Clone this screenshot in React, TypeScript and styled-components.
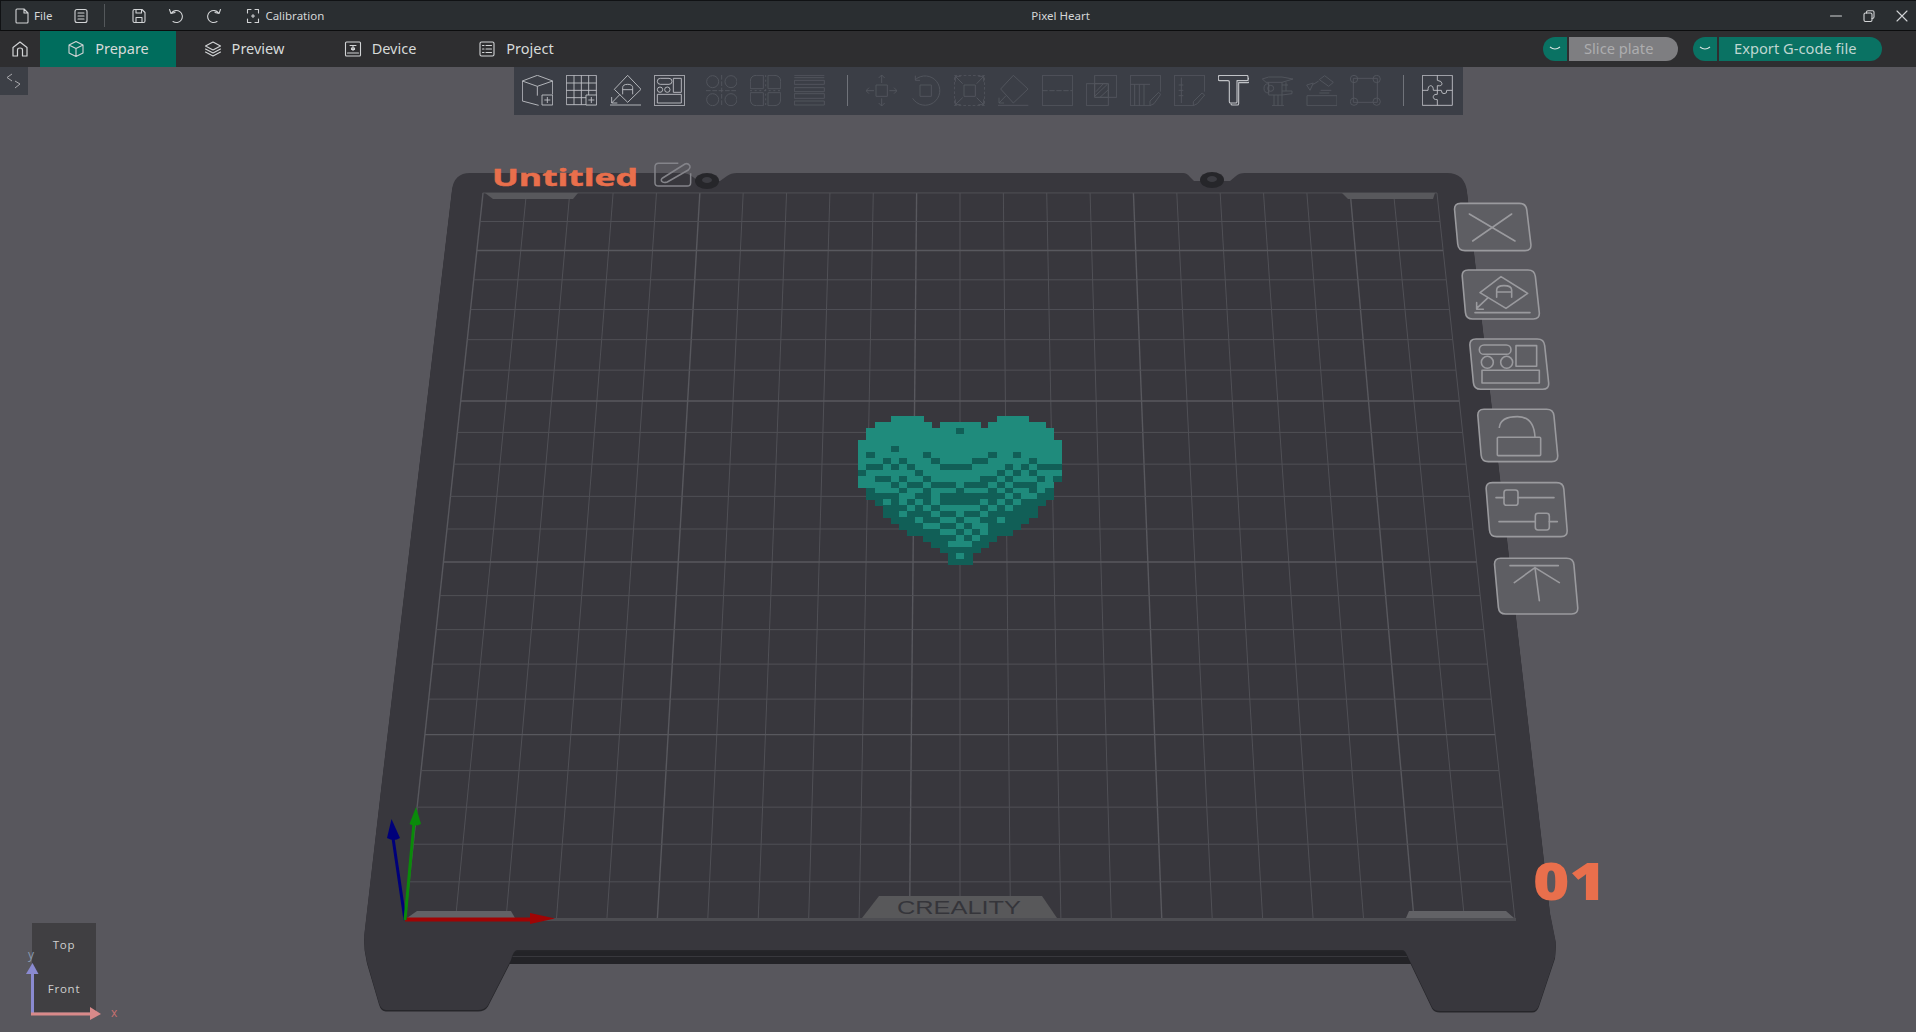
import React from "react";
import styled, { createGlobalStyle } from "styled-components";

const GlobalStyle = createGlobalStyle`
  html, body {
    margin: 0;
    padding: 0;
    height: 100%;
    overflow: hidden;
    background: #58575d;
  }
  #root {
    height: 100%;
  }
`;

const Page = styled.div`
  display: flex;
  flex-direction: column;
  height: 100vh;
  font-family: "Noto Sans", "Open Sans", sans-serif;
`;

const TitleBar = styled.div`
  position: relative;
  display: flex;
  align-items: center;
  height: 31px;
  box-sizing: border-box;
  flex: none;
  background: #2a2e31;
  border-top: 1px solid #101214;
  border-bottom: 1px solid #0c0d0e;
  border-left: 1px solid #101214;
  color: #d4d6d8;
  font-size: 11.5px;
`;

const BarGlyph = styled.svg`
  flex: none;
  fill: none;
  stroke: #d2d4d6;
  stroke-width: 1.1;
  stroke-linecap: round;
  stroke-linejoin: round;
`;

const BarItem = styled.div<{ $left: number }>`
  display: flex;
  align-items: center;
  gap: 5px;
  margin-left: ${(p) => p.$left}px;
`;

const BarRule = styled.div`
  width: 1px;
  height: 23px;
  margin-left: 16px;
  background: #54585b;
`;

const WindowTitle = styled.div`
  position: absolute;
  left: 0;
  right: 0;
  top: 0;
  bottom: 0;
  padding-left: 204px;
  display: flex;
  align-items: center;
  justify-content: center;
  pointer-events: none;
`;

const WindowControls = styled.div`
  margin-left: auto;
  display: flex;
  gap: 21px;
  padding-right: 8px;
`;

const TabBar = styled.div`
  display: flex;
  align-items: stretch;
  height: 36px;
  flex: none;
  background: #2e2e30;
`;

const HomeSlot = styled.div`
  width: 40px;
  display: flex;
  align-items: center;
  justify-content: center;
`;

const Tab = styled.div<{ $active?: boolean }>`
  width: 136px;
  box-sizing: border-box;
  display: flex;
  align-items: center;
  justify-content: center;
  gap: 10px;
  background: ${(p) => (p.$active ? "#006d5d" : "transparent")};
  color: #d6dad9;
  font-size: 14.5px;
  line-height: 1;
  span {
    position: relative;
    top: -1px;
  }
`;

const ActionGroup = styled.div`
  margin-left: auto;
  display: flex;
  align-items: center;
  gap: 15px;
  padding-right: 34px;
`;

const SplitButton = styled.div`
  display: flex;
  height: 24px;
  gap: 2px;
`;

const SplitArrow = styled.div`
  width: 24px;
  display: flex;
  align-items: center;
  justify-content: center;
  background: #0a7263;
  border-radius: 12px 0 0 12px;
`;

const SplitLabel = styled.div<{ $off?: boolean; $width: number }>`
  width: ${(p) => p.$width}px;
  box-sizing: border-box;
  padding: 0 0 3px 15px;
  display: flex;
  align-items: center;
  font-size: 14.7px;
  border-radius: 0 12px 12px 0;
  background: ${(p) => (p.$off ? "#7e7e81" : "#0a7263")};
  color: ${(p) => (p.$off ? "#adadaf" : "#bfd6d1")};
`;

const Viewport = styled.div`
  position: relative;
  flex: 1;
  min-height: 0;
  overflow: hidden;
  background: #58575d;
`;

const Scene = styled.svg`
  display: block;
  width: 100%;
  height: 100%;
`;

const SideToggle = styled.div`
  position: absolute;
  left: 0;
  top: 0;
  width: 28px;
  height: 28px;
  background: #3c3f46;
`;

const Toolbar = styled.div`
  position: absolute;
  left: 514px;
  top: 0;
  display: flex;
  gap: 13px;
  padding: 8px 10px 9px 8px;
  background: #3b3e46;
`;

const ToolRule = styled.div`
  width: 1px;
  height: 31px;
  margin: 0 5px 0 9px;
  background: #70737a;
`;

const ToolGlyph = styled.svg<{ $off?: boolean; $gap?: number }>`
  flex: none;
  width: 31px;
  height: 31px;
  margin-left: ${(p) => p.$gap || 0}px;
  fill: none;
  stroke: ${(p) => (p.$off ? "#54575f" : "#c0c2c6")};
  stroke-width: 2.7;
  stroke-linejoin: round;
`;

const ViewCube = styled.div`
  position: absolute;
  left: 32px;
  top: 856px;
  width: 64px;
  height: 89px;
  display: flex;
  flex-direction: column;
  background: #403f42;
  color: #cfcfcf;
  font-family: "Open Sans", sans-serif;
  font-size: 11.5px;
  letter-spacing: 0.8px;
`;

const CubeFace = styled.div`
  flex: 1;
  padding-bottom: 2px;
  display: flex;
  align-items: center;
  justify-content: center;
`;

const CubeAxes = styled.svg`
  position: absolute;
  left: 0;
  top: 870px;
  width: 130px;
  height: 95px;
  overflow: visible;
`;

const AxisLabel = styled.text<{ $color: string }>`
  fill: ${(p) => p.$color};
  font-family: "Open Sans", sans-serif;
  font-size: 12px;
`;

const PlateName = styled.text`
  fill: #e96f4c;
  stroke: #e96f4c;
  stroke-width: 0.5px;
  font-family: "Open Sans", sans-serif;
  font-weight: 700;
  font-size: 23px;
`;

const PlateIndex = styled.text`
  fill: #e96f4c;
  font-family: "Open Sans", sans-serif;
  font-weight: 800;
  font-size: 51px;
`;

const BrandMark = styled.text`
  fill: #35353a;
  font-family: "Liberation Sans", sans-serif;
  font-size: 18px;
`;

const Chevron = () => (
  <svg width="12" height="6" viewBox="0 0 12 6" fill="none" stroke="#d8e4e1" strokeWidth="1.2">
    <path d="M1 1 Q6 5 11 1" />
  </svg>
);

const plusBox = (x: number, y: number) => (
  <>
    <rect x={x} y={y} width={32} height={30} fill="#3b3e46" />
    <path d={`M${x + 16} ${y + 6} V${y + 24} M${x + 7} ${y + 15} H${x + 25}`} />
  </>
);

const letterA = "M38 58 V38 Q38 28 53 28 Q68 28 68 38 V58 M38 44 H68";

const tools: { off?: boolean; gap?: number; rule?: boolean; art?: React.ReactNode }[] = [
  {
    art: (
      <>
        <path d="M1 18 L46 1 L92 18 V58 M1 18 V78 L50 91 M1 18 L46 34 L92 18 M46 34 V62" />
        {plusBox(60, 60)}
      </>
    ),
  },
  {
    art: (
      <>
        <rect x="1" y="1" width="90" height="88" />
        <path d="M24 1 V89 M46 1 V89 M68 1 V60 M1 24 H91 M1 46 H91 M1 68 H60" />
        {plusBox(60, 60)}
      </>
    ),
  },
  {
    art: (
      <>
        <path d="M53 1 L93 43 L53 82 L13 43 Z M0 90 H93 M30 58 L5 84 M5 66 V84 H22" />
        <path d={letterA} />
      </>
    ),
  },
  {
    art: (
      <>
        <rect x="1" y="1" width="91" height="91" />
        <rect x="10" y="10" width="44" height="18" rx="9" />
        <rect x="58" y="10" width="24" height="42" />
        <circle cx="18" cy="44" r="8" />
        <circle cx="40" cy="44" r="8" />
        <rect x="10" y="58" width="72" height="26" />
      </>
    ),
  },
  {
    off: true,
    gap: 8,
    art: (
      <>
        <circle cx="20" cy="20" r="18" />
        <circle cx="75" cy="20" r="18" />
        <circle cx="20" cy="74" r="18" />
        <circle cx="75" cy="74" r="18" />
        <path d="M47 0 V93 M0 47 H93" strokeDasharray="14 5" />
      </>
    ),
  },
  {
    off: true,
    art: (
      <>
        <path d="M40 1 H20 Q1 1 1 20 V41 H40 Z M54 1 H72 Q92 1 92 20 V41 H54 Z M40 53 H1 V72 Q1 92 20 92 H40 Z M54 53 H92 V72 Q92 92 72 92 H54 Z" />
        <path d="M47 0 V93 M0 47 H93" strokeDasharray="6 8" />
      </>
    ),
  },
  {
    off: true,
    art: (
      <>
        <path d="M1 1 H91 M1 8 H91 M1 16 V28 H91 V16 Z M1 38 V50 H91 V38 Z M1 56 V70 H91 V56 Z M1 78 V90 H91 V78 Z" />
      </>
    ),
  },
  { rule: true },
  {
    off: true,
    art: (
      <>
        <rect x="30" y="30" width="34" height="34" />
        <path d="M47 0 V24 M38 9 L47 0 L56 9 M47 93 V70 M38 84 L47 93 L56 84 M0 47 H24 M9 38 L0 47 L9 56 M93 47 H70 M84 38 L93 47 L84 56" />
      </>
    ),
  },
  {
    off: true,
    art: (
      <>
        <rect x="30" y="30" width="34" height="34" />
        <path d="M16 14 A44 44 0 1 1 8 70 M16 2 V16 H30" />
      </>
    ),
  },
  {
    off: true,
    art: (
      <>
        <rect x="1" y="1" width="91" height="91" strokeDasharray="8 6" />
        <rect x="30" y="30" width="34" height="34" />
        <path d="M4 4 L26 26 M89 4 L68 26 M4 89 L26 68 M89 89 L68 68 M4 20 V4 H20 M73 4 H89 V20 M4 73 V89 H20 M73 89 H89 V73" />
      </>
    ),
  },
  {
    off: true,
    art: (
      <>
        <path d="M46 1 L90 42 L46 84 L8 42 Z M0 91 H91 M24 62 L3 84 M3 68 V84 H18" />
      </>
    ),
  },
  {
    off: true,
    art: (
      <>
        <rect x="1" y="1" width="91" height="91" />
        <path d="M1 47 H91" strokeDasharray="16 5" />
      </>
    ),
  },
  {
    off: true,
    art: (
      <>
        <rect x="26" y="1" width="66" height="66" />
        <rect x="1" y="26" width="66" height="66" />
        <path d="M26 26 H67 V67 H26 Z M30 50 L52 26 M26 64 L64 28 M42 67 L67 44" />
      </>
    ),
  },
  {
    off: true,
    art: (
      <>
        <path d="M92 50 V1 H1 V92 H62 M1 28 H60 M14 28 V92 M28 28 V92 M42 28 V92 M60 78 L86 52 L92 58 L72 86 L60 92 Z" />
      </>
    ),
  },
  {
    off: true,
    art: (
      <>
        <path d="M92 50 V1 H1 V92 H58 M22 8 V84" />
        <path d="M58 80 L84 54 L92 60 L70 86 L58 92 Z M14 30 H28 M14 46 H28 M14 62 H28" />
      </>
    ),
  },
  {
    art: (
      <path
        d="M6 1 H86 Q90 1 90 5 V14 Q90 17 86 17 H57 V80 Q57 84 53 84 H38 Q34 84 34 80 V20 Q34 17 30 17 H5 Q1 17 1 13 V5 Q1 1 6 1 Z M90 10 H94 V20 Q94 23 90 23 H62 V86 Q62 90 58 90 H43 Q39 90 39 86"
        strokeWidth="3.4"
      />
    ),
  },
  {
    off: true,
    art: (
      <>
        <path d="M1 12 L20 6 H60 L93 12 L60 22 H12 Z M20 22 V60 H60 V22 M6 40 Q6 26 20 26 V54 Q6 54 6 40 Z M60 48 H90 V56 L60 60 M36 60 V92 M48 60 V92 M60 60 V92 M30 92 H66 M60 30 H78 M72 22 V48" />
        <circle cx="26" cy="40" r="9" />
      </>
    ),
  },
  {
    off: true,
    art: (
      <>
        <rect x="3" y="62" width="90" height="30" />
        <path d="M40 14 L56 2 L82 22 L68 34 Z M44 46 H76 M40 54 H70 M2 30 L22 24 L12 46 Z M38 18 L22 28" />
      </>
    ),
  },
  {
    off: true,
    art: (
      <>
        <rect x="10" y="10" width="72" height="72" />
        <circle cx="12" cy="12" r="11" />
        <circle cx="80" cy="12" r="11" />
        <circle cx="12" cy="80" r="11" />
        <circle cx="80" cy="80" r="11" />
      </>
    ),
  },
  { rule: true },
  {
    art: (
      <>
        <rect x="1" y="1" width="90" height="90" />
        <path d="M46 1 V16 Q60 18 60 26 Q60 34 46 32 V58 Q36 56 34 64 Q32 74 46 74 V91 M1 46 H18 Q18 32 26 32 Q34 32 34 46 H58 Q58 56 66 56 Q76 56 74 46 H91" />
      </>
    ),
  },
];

const heartRows = [
  "....LLLL.........LLLL....",
  "..LLLLLLL.LLLLL.LLLLLLL..",
  ".LLLLLLLLLLLDLLLLLLLLLLL.",
  ".LLLLLLLLLLLLLLLLLLLLLLL.",
  "LLLLLLLLLLLLLLLLLLLLLLLLL",
  "LLLLDLLLLLLLLLLLLLLLLLLLL",
  "LDLLLLLLDLLLLLLLDLLDLLLLL",
  "LLLDLDLLLDLLLLDDLLLLLDLLL",
  "LDDLDLDLLLDDDDLLLLDLDLDDD",
  "DLLLLLLDLLLLLLLLLDLDLDLLL",
  "LLDDLDLLDLLLLLLDDLDLLLDLD",
  "LLLLDLDDLDDDLDDDLDLDDDLL.",
  ".DLLLDLLDLLLDLLLDLDLLDLD.",
  ".DDDDLLDDLDDDDDDDDLDLLDD.",
  "..DLDLDLDLDDDDDLDLDLDDD..",
  "...DDDLDLDLLLLLDLDLDDD...",
  "...DDLDDDLDDLDDLDDDDDD...",
  "....DDDLDDLLDLLDDLDDD....",
  ".....DDDLLDDLDLLDDDD.....",
  "......DDDDLLDLDLDDD......",
  "........DDDDLDLDD........",
  ".........DDLLLDD.........",
  "..........DDDDD..........",
  "...........DLD...........",
  "...........DDD...........",
];

const HEART_X = 858.3;
const HEART_Y = 416;
const HEART_W = 8.13;
const HEART_H = 5.96;

const Heart = () => (
  <g shapeRendering="crispEdges">
    {heartRows.map((row, r) =>
      row.split("").map((cell, c) =>
        cell === "." ? null : (
          <rect
            key={`${r}-${c}`}
            x={HEART_X + c * HEART_W}
            y={HEART_Y + r * HEART_H}
            width={HEART_W + 0.4}
            height={HEART_H + 0.4}
            fill={cell === "L" ? "#1f8b7c" : "#115f57"}
          />
        )
      )
    )}
  </g>
);

// bed perspective, u goes left to right and v from front to back
const K = 0.1636;
const project = (u: number, v: number): [number, number] => {
  const s = 1 / (1 + K * v);
  return [960 + (u - 0.5) * 1110 * s, 920 - 846 * v * s];
};

const BedGrid = () => {
  const cells = Array.from({ length: 23 }, (_, i) => i);
  const line = (i: number) => ({
    stroke: i % 5 === 0 ? "#58585e" : "#505056",
    strokeWidth: i % 5 === 0 ? 1.4 : 1,
  });
  return (
    <g>
      {cells.map((i) => {
        const [x1, y1] = project(i / 22, 0);
        const [x2, y2] = project(i / 22, 1);
        return <line key={`v${i}`} x1={x1} y1={y1} x2={x2} y2={y2} {...line(i)} />;
      })}
      {cells.map((i) => {
        const [x1, y1] = project(0, i / 22);
        const [x2, y2] = project(1, i / 22);
        return <line key={`h${i}`} x1={x1} y1={y1} x2={x2} y2={y2} {...line(i)} />;
      })}
    </g>
  );
};

const plateOutline =
  "M470 173 H682 Q688 173 693 177 L698 181 H720 L727 176 Q731 173 737 173 H1183 Q1187 173 1190 177 L1194 181 H1230 L1236 176 Q1239 173 1245 173 H1447 Q1465 173 1467 192 L1550 913 L1556 943 L1555 957 L1539 1005 Q1537 1011 1532 1011 H1440 Q1434 1011 1432 1007 L1407 955 Q1405 950 1402 950 H517 Q513 951 511 960 L488 1005 Q485 1010 478 1010 H386 Q381 1010 379 1003 L367 962 Q364 950 364 937 L381 790 L452 190 Q454 173 470 173 Z";

// four corners, clockwise from top left, each corner rounded off
const roundedQuad = (pts: number[]) => {
  const corners = [0, 2, 4, 6].map((i) => [pts[i], pts[i + 1]]);
  const r = 20;
  const toward = (a: number[], b: number[]) => {
    const d = Math.hypot(b[0] - a[0], b[1] - a[1]);
    return [a[0] + ((b[0] - a[0]) * r) / d, a[1] + ((b[1] - a[1]) * r) / d];
  };
  const parts = corners.map((c, i) => {
    const prev = corners[(i + 3) % 4];
    const next = corners[(i + 1) % 4];
    const a = toward(c, prev);
    const b = toward(c, next);
    return `${i === 0 ? "M" : "L"}${a[0]} ${a[1]} Q${c[0]} ${c[1]} ${b[0]} ${b[1]}`;
  });
  return parts.join(" ") + " Z";
};

const PlateButtons = () => (
  // drawn in the pixel grid of a 3x crop, easier to line up
  <g transform="translate(1430 190) scale(0.3333)" fill="none" stroke="#9a9a9e" strokeWidth="4.8" strokeLinecap="round" strokeLinejoin="round">
    <path d={roundedQuad([72, 40, 288, 40, 305, 182, 85, 182])} fill="#5e5e63" />
    <path d="M118 72 L255 153 M245 72 L128 153" />
    <path d={roundedQuad([95, 240, 314, 240, 330, 387, 108, 387])} fill="#5e5e63" />
    <path d="M213 260 L293 310 L228 355 L150 308 Z M200 322 V300 Q200 287 222 287 Q245 287 245 300 V322 M200 306 H245 M135 368 H300 M172 325 L140 355 M140 338 V358 H160" />
    <path d={roundedQuad([118, 447, 342, 447, 358, 598, 132, 598])} fill="#5e5e63" />
    <rect x="148" y="465" width="95" height="28" rx="14" />
    <circle cx="172" cy="517" r="18" />
    <circle cx="230" cy="517" r="18" />
    <rect x="258" y="467" width="62" height="62" />
    <rect x="156" y="541" width="172" height="38" />
    <path d={roundedQuad([142, 658, 370, 658, 385, 815, 155, 815])} fill="#5e5e63" />
    <path d="M208 712 Q212 680 262 680 Q312 680 315 742" />
    <rect x="202" y="742" width="130" height="55" rx="3" />
    <path d={roundedQuad([167, 878, 400, 878, 413, 1040, 180, 1040])} fill="#5e5e63" />
    <path d="M198 923 H222 M264 923 H372 M207 995 H316 M358 995 H382" />
    <rect x="222" y="900" width="42" height="46" rx="8" />
    <rect x="316" y="970" width="42" height="50" rx="8" />
    <path d={roundedQuad([192, 1105, 430, 1105, 445, 1272, 207, 1272])} fill="#5e5e63" />
    <path d="M240 1127 H385 M315 1133 L328 1232 M315 1133 L253 1178 M315 1133 L388 1178" />
  </g>
);

const App = () => (
  <Page>
    <GlobalStyle />
    <TitleBar>
      <BarItem $left={14}>
        <BarGlyph width="14" height="16" viewBox="0 0 14 16">
          <path d="M1 2 Q1 1 2 1 H9 L13 5 V14 Q13 15 12 15 H2 Q1 15 1 14 Z M9 1 V5 H13" />
        </BarGlyph>
        File
      </BarItem>
      <BarItem $left={22}>
        <BarGlyph width="14" height="16" viewBox="0 0 14 16">
          <rect x="1" y="1.5" width="12" height="13" rx="2" />
          <path d="M4 5 H10 M4 8 H10 M4 11 H10" />
        </BarGlyph>
      </BarItem>
      <BarRule />
      <BarItem $left={27}>
        <BarGlyph width="14" height="16" viewBox="0 0 14 16">
          <path d="M1 3 Q1 1.5 2.5 1.5 H10 L13 4.5 V13 Q13 14.5 11.5 14.5 H2.5 Q1 14.5 1 13 Z M4 1.5 V5 H9.5 V1.5 M4 14.5 V9.5 H10 V14.5" />
        </BarGlyph>
      </BarItem>
      <BarItem $left={22}>
        <BarGlyph width="15" height="16" viewBox="0 0 15 16">
          <path d="M3.5 5 A6 6 0 1 1 5 13.5 M1.5 1.5 L3 5.5 L7 4.5" />
        </BarGlyph>
      </BarItem>
      <BarItem $left={24}>
        <BarGlyph width="15" height="16" viewBox="0 0 15 16">
          <path d="M11.5 5 A6 6 0 1 0 10 13.5 M13.5 1.5 L12 5.5 L8 4.5" />
        </BarGlyph>
      </BarItem>
      <BarItem $left={24}>
        <BarGlyph width="14" height="16" viewBox="0 0 14 16">
          <path d="M5 1.5 H1.5 V5 M9 1.5 H12.5 V5 M5 14.5 H1.5 V11 M9 14.5 H12.5 V11 M7 6.5 V9.5 M5.5 8 H8.5" />
        </BarGlyph>
        Calibration
      </BarItem>
      <WindowTitle>Pixel Heart</WindowTitle>
      <WindowControls>
        <BarGlyph width="12" height="12" viewBox="0 0 12 12">
          <path d="M0.5 6 H11.5" />
        </BarGlyph>
        <BarGlyph width="12" height="12" viewBox="0 0 12 12">
          <rect x="1" y="3" width="8" height="8.5" rx="1.5" />
          <path d="M3.5 3 V2 Q3.5 0.7 5 0.7 H9.5 Q11 0.7 11 2 V7 Q11 8.5 9 8.5" />
        </BarGlyph>
        <BarGlyph width="12" height="12" viewBox="0 0 12 12">
          <path d="M1 1 L11 11 M11 1 L1 11" />
        </BarGlyph>
      </WindowControls>
    </TitleBar>

    <TabBar>
      <HomeSlot>
        <BarGlyph width="18" height="18" viewBox="0 0 18 18" style={{ strokeWidth: 1.2 }}>
          <path d="M2 16 V7.5 L9 2 L16 7.5 V16 H11.5 V10 Q11.5 8 9 8 Q6.5 8 6.5 10 V16 Z" />
        </BarGlyph>
      </HomeSlot>
      <Tab $active>
        <BarGlyph width="18" height="18" viewBox="0 0 18 18">
          <path d="M9 1.5 L16 5 V13 L9 16.5 L2 13 V5 Z M2 5 L9 8.5 L16 5 M9 8.5 V16.5" />
        </BarGlyph>
        <span>Prepare</span>
      </Tab>
      <Tab>
        <BarGlyph width="18" height="18" viewBox="0 0 18 18">
          <path d="M9 2 L16.5 6 L9 10 L1.5 6 Z M1.5 9 L9 13 L16.5 9 M1.5 12 L9 16 L16.5 12" />
        </BarGlyph>
        <span>Preview</span>
      </Tab>
      <Tab>
        <BarGlyph width="18" height="18" viewBox="0 0 18 18">
          <rect x="1.5" y="2" width="15" height="14" rx="1" />
          <path d="M3.5 13 H14.5 M6 5.5 H12 M9 5.5 V10.5 M7.5 8 H10.5 V9.5 H7.5 Z" />
        </BarGlyph>
        <span>Device</span>
      </Tab>
      <Tab>
        <BarGlyph width="18" height="18" viewBox="0 0 18 18">
          <rect x="2" y="2" width="14" height="14" rx="1.5" />
          <path d="M4.5 5.5 H6 M8 5.5 H13.5 M4.5 9 H6 M8 9 H13.5 M4.5 12.5 H6 M8 12.5 H13.5" />
        </BarGlyph>
        <span>Project</span>
      </Tab>
      <ActionGroup>
        <SplitButton>
          <SplitArrow>
            <Chevron />
          </SplitArrow>
          <SplitLabel $off $width={109}>
            Slice plate
          </SplitLabel>
        </SplitButton>
        <SplitButton>
          <SplitArrow>
            <Chevron />
          </SplitArrow>
          <SplitLabel $width={163}>Export G-code file</SplitLabel>
        </SplitButton>
      </ActionGroup>
    </TabBar>

    <Viewport>
      <Scene viewBox="0 67 1916 965" preserveAspectRatio="xMinYMin slice">
        <rect x="500" y="950" width="920" height="14" fill="#232327" />
        <rect x="500" y="956" width="920" height="1" fill="#38383d" />
        <path d={plateOutline} fill="#26262a" transform="translate(0 1.5)" />
        <path d={plateOutline} fill="#38373d" />

        <BedGrid />
        <rect x="405" y="918" width="1111" height="3" fill="#4d4d52" />

        <path d="M485 193 H578 L573 199 H493 Z" fill="#58585c" />
        <path d="M1342 193 H1435 L1433 199 H1348 Z" fill="#58585c" />
        <path d="M407 918 L417 911 H511 L515 918 Z" fill="#626266" />
        <path d="M1406 918 L1409 911 H1506 L1514 918 Z" fill="#626266" />
        <path d="M862 918 L879 896 H1042 L1057 918 Z" fill="#58585a" />
        <BrandMark x="897" y="914" textLength="124" lengthAdjust="spacingAndGlyphs">
          CREALITY
        </BrandMark>

        <ellipse cx="707" cy="181" rx="12" ry="8" fill="#26262a" />
        <ellipse cx="707" cy="180" rx="5" ry="3" fill="#3c3c42" />
        <ellipse cx="1212" cy="180" rx="12" ry="8" fill="#26262a" />
        <ellipse cx="1212" cy="179" rx="5" ry="3" fill="#3c3c42" />

        <PlateName x="492" y="185.5" textLength="146" lengthAdjust="spacingAndGlyphs">
          Untitled
        </PlateName>
        <g transform="translate(440 150) scale(0.3333)" fill="none" stroke="#84848a" strokeWidth="4.5" strokeLinejoin="round">
          <path d="M715 40 H656 Q645 40 645 52 V98 Q645 108 656 108 H742 Q752 108 752 98 V70" />
          <path d="M668 84 L735 42 Q745 38 750 48 Q752 54 745 60 L682 96 Q670 100 665 94 Q662 88 668 84 Z" />
        </g>

        <Heart />
        <PlateButtons />

        <PlateIndex transform="translate(1533 900) scale(1.22 1)">01</PlateIndex>

        <path d="M405 919 H530 M405 920 H530" stroke="#a00404" strokeWidth="3" />
        <path d="M530 913 L555 918.5 L530 924 Z" fill="#a00404" />
        <path d="M405 920 L393 838" stroke="#00007a" strokeWidth="3" />
        <path d="M391.5 819 L400 838 Q394 842 387 838 Z" fill="#00007a" />
        <path d="M405 920 L414 823" stroke="#0a8a0a" strokeWidth="3" />
        <path d="M416 807 L421 824 Q415 827 409.5 824 Z" fill="#0a8a0a" />
      </Scene>

      <SideToggle>
        <svg width="28" height="28" viewBox="0 0 28 28" fill="none" stroke="#a8a8ac" strokeWidth="1">
          <path d="M12 7 L7 10.5 L12 14 M15 14 L20 17 L15 21" />
        </svg>
      </SideToggle>

      <Toolbar>
        {tools.map((tool, i) =>
          tool.rule ? (
            <ToolRule key={i} />
          ) : (
            <ToolGlyph key={i} viewBox="0 0 93 93" $off={tool.off} $gap={tool.gap}>
              {tool.art}
            </ToolGlyph>
          )
        )}
      </Toolbar>

      <ViewCube>
        <CubeFace>Top</CubeFace>
        <CubeFace>Front</CubeFace>
      </ViewCube>
      <CubeAxes viewBox="0 0 130 95">
        <path d="M32.5 78 V32" stroke="#8a8ad0" strokeWidth="3" />
        <path d="M26 37 L32.5 26 L38.5 37 Z" fill="#8a8ad0" />
        <path d="M31 77 H90" stroke="#d98a8a" strokeWidth="3" />
        <path d="M90 70 L101 77 L90 83 Z" fill="#d98a8a" />
        <AxisLabel $color="#8a9ab0" x="28" y="22">
          y
        </AxisLabel>
        <AxisLabel $color="#c87070" x="111" y="80">
          x
        </AxisLabel>
      </CubeAxes>
    </Viewport>
  </Page>
);

export default App;
